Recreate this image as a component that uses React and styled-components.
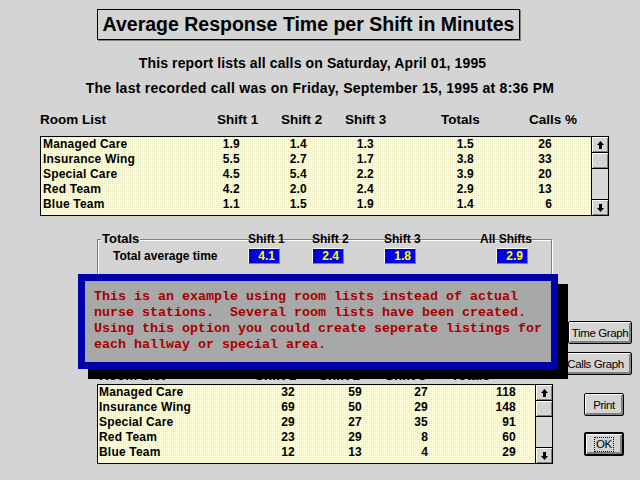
import React from 'react';
import styled, { createGlobalStyle } from 'styled-components';

const Global = createGlobalStyle`
  html, body { margin: 0; padding: 0; background: #d4d4d4; }
`;

const Page = styled.div`
  position: relative;
  width: 640px;
  height: 480px;
  overflow: hidden;
  background: #d4d4d4;
  font-family: "Liberation Sans", Arial, sans-serif;
  color: #000;
  display: flex;
  flex-direction: column;
`;

const TitleBox = styled.div`
  align-self: flex-start;
  margin: 9px 0 0 97px;
  width: 423px;
  height: 31px;
  box-sizing: border-box;
  border: 1px solid #000;
  box-shadow: 1px 1px 0 #808080;
  display: flex;
  align-items: center;
  justify-content: center;
  font-size: 19.5px;
  font-weight: 700;
`;

const Subtitle = styled.div`
  margin-top: ${p => p.$top}px;
  padding-right: ${p => p.$shift || 0}px;
  text-align: center;
  font-size: 14px;
  font-weight: 700;
  line-height: 18px;
  letter-spacing: ${p => p.$ls || 0.12}px;
`;

const HeaderRow = styled.div`
  display: grid;
  grid-template-columns: ${p => p.$cols};
  margin: ${p => p.$margin};
  font-size: 13.5px;
  font-weight: 700;
  line-height: ${p => p.$lh || 16}px;
  white-space: nowrap;
`;

const ListBox = styled.div`
  display: flex;
  margin-left: ${p => p.$left}px;
  width: ${p => p.$width}px;
  height: 80px;
  box-sizing: border-box;
  border: 1px solid #000;
  background-color: #fdfdd8;
  background-image: conic-gradient(#f4f45c 0 25%, transparent 0);
  background-size: 2px 2px;
`;

const Rows = styled.div`
  flex: 1;
  padding-left: ${p => p.$pad}px;
`;

const Row = styled.div`
  display: grid;
  grid-template-columns: ${p => p.$cols};
  height: 15px;
  line-height: 15px;
  font-size: 12px;
  font-weight: 700;
  letter-spacing: 0.2px;
  white-space: nowrap;
`;

const Num = styled.span`
  text-align: right;
`;

const ScrollBar = styled.div`
  width: 16px;
  border-left: 1px solid #000;
  display: flex;
  flex-direction: column;
  background: #d8d8d8;
`;

const ScrollBtn = styled.div`
  height: 15px;
  background: #d4d4d4;
  box-shadow: inset 1px 1px 0 #fff, inset -1px -1px 0 #808080;
  ${p => (p.$down ? 'border-top: 1px solid #000;' : 'border-bottom: 1px solid #000;')}
  display: flex;
  align-items: center;
  justify-content: center;
`;

const Thumb = styled.div`
  height: 15px;
  background: #d4d4d4;
  box-shadow: inset 1px 1px 0 #fff, inset -1px -1px 0 #808080;
  border-bottom: 1px solid #000;
`;

const Track = styled.div`
  flex: 1;
`;

const GroupBox = styled.div`
  margin: 23px 0 0 97px;
  width: 455px;
  height: 60px;
  box-sizing: border-box;
  border: 1px solid #808080;
  box-shadow: inset 1px 1px 0 #fff, 1px 1px 0 #fff;
`;

const Legend = styled.div`
  height: 0;
  margin: -8px 0 0 3px;
  line-height: 14px;
  font-size: 13px;
  font-weight: 700;
`;

const LegendText = styled.span`
  background: #d4d4d4;
  padding: 0 1px;
`;

const GroupGrid = styled.div`
  display: grid;
  grid-template-columns: 135px 64px 72px 96px auto;
  grid-template-rows: 14px 16px;
  row-gap: 2px;
  align-items: center;
  padding-left: 15px;
  font-size: 12px;
  font-weight: 700;
  line-height: 14px;
  white-space: nowrap;
`;

const ValueBox = styled.div`
  width: 32px;
  height: 16px;
  margin-left: ${p => p.$offset || 0}px;
  box-sizing: border-box;
  border: 1px solid;
  border-color: #fff #808080 #808080 #fff;
  background: #0000e0;
  color: #ffff00;
  text-align: right;
  padding-right: 4px;
  line-height: 14px;
`;

const Lower = styled.div`
  display: flex;
  gap: 6px;
  margin: 22px 0 0 97px;
`;

const LowerLeft = styled.div`
  width: 456px;
  height: 143px;
  display: flex;
  flex-direction: column;
  justify-content: flex-end;
`;

const ButtonCol = styled.div`
  width: 73px;
  display: flex;
  flex-direction: column;
  align-items: flex-end;
`;

const Button = styled.button`
  width: ${p => p.$w}px;
  height: ${p => p.$h || 23}px;
  margin-top: ${p => p.$top || 0}px;
  margin-right: ${p => p.$right || 0}px;
  padding: 0;
  box-sizing: border-box;
  border: ${p => (p.$default ? 2 : 1)}px solid #000;
  border-radius: 2px;
  background: #d4d4d4;
  box-shadow: inset 1px 1px 0 #fff, inset -2px -2px 0 #808080;
  font-family: "Liberation Sans", Arial, sans-serif;
  font-size: 11.5px;
  letter-spacing: -0.4px;
  color: #000;
  display: flex;
  align-items: center;
  justify-content: center;
`;

const FocusRing = styled.span`
  border: 1px dotted #000;
  padding: 0 1px;
  line-height: 13px;
`;

const Notice = styled.div`
  position: absolute;
  left: 78px;
  top: 274px;
  width: 480px;
  height: 95px;
  box-sizing: border-box;
  border: 7px solid #0000a8;
  background: #a8a8a8;
  box-shadow: 10px 10px 0 #000;
  padding: 8px 0 0 9px;
  font-family: "Liberation Mono", "Courier New", monospace;
  font-size: 13.333px;
  font-weight: 700;
  line-height: 16px;
  color: #a80000;
  white-space: pre;
`;

const Arrow = ({ down }) => (
  <svg width="7" height="8" viewBox="0 0 7 8" style={{ transform: down ? 'rotate(180deg)' : 'none' }}>
    <polygon points="3.5,0 7,4 5,4 5,8 2,8 2,4 0,4" fill="#000" />
  </svg>
);

const Scroller = () => (
  <ScrollBar>
    <ScrollBtn><Arrow /></ScrollBtn>
    <Thumb />
    <Track />
    <ScrollBtn $down><Arrow down /></ScrollBtn>
  </ScrollBar>
);

const rooms = [
  ['Managed Care', '1.9', '1.4', '1.3', '1.5', '26'],
  ['Insurance Wing', '5.5', '2.7', '1.7', '3.8', '33'],
  ['Special Care', '4.5', '5.4', '2.2', '3.9', '20'],
  ['Red Team', '4.2', '2.0', '2.4', '2.9', '13'],
  ['Blue Team', '1.1', '1.5', '1.9', '1.4', '6'],
];

const calls = [
  ['Managed Care', '32', '59', '27', '118'],
  ['Insurance Wing', '69', '50', '29', '148'],
  ['Special Care', '29', '27', '35', '91'],
  ['Red Team', '23', '29', '8', '60'],
  ['Blue Team', '12', '13', '4', '29'],
];

const upperCols = '160px 37px 67px 67px 100px 78px';
const lowerCols = '156px 40px 67px 66px 88px';

export default function App() {
  return (
    <Page>
      <Global />
      <TitleBox>Average Response Time per Shift in Minutes</TitleBox>
      <Subtitle $top={14} $shift={15}>This report lists all calls on Saturday, April 01, 1995</Subtitle>
      <Subtitle $top={7} $ls={0.25}>The last recorded call was on Friday, September 15, 1995 at 8:36 PM</Subtitle>

      <HeaderRow $cols="177px 64px 64px 96px 88px auto" $margin="15px 0 0 40px">
        <span>Room List</span>
        <span>Shift 1</span>
        <span>Shift 2</span>
        <span>Shift 3</span>
        <span>Totals</span>
        <span>Calls %</span>
      </HeaderRow>
      <ListBox $left={40} $width={569} style={{ marginTop: 8 }}>
        <Rows $pad={2}>
          {rooms.map(r => (
            <Row key={r[0]} $cols={upperCols}>
              <span>{r[0]}</span>
              {r.slice(1).map((v, i) => <Num key={i}>{v}</Num>)}
            </Row>
          ))}
        </Rows>
        <Scroller />
      </ListBox>

      <GroupBox>
        <Legend><LegendText>Totals</LegendText></Legend>
        <GroupGrid>
          <span />
          <span>Shift 1</span>
          <span>Shift 2</span>
          <span>Shift 3</span>
          <span>All Shifts</span>
          <span>Total average time</span>
          <ValueBox>4.1</ValueBox>
          <ValueBox>2.4</ValueBox>
          <ValueBox>1.8</ValueBox>
          <ValueBox $offset={16}>2.9</ValueBox>
        </GroupGrid>
      </GroupBox>

      <Lower>
        <LowerLeft>
          <HeaderRow $cols="156px 64px 66px 66px auto" $margin="0 0 1px 2px" $lh={14}>
            <span>Room List</span>
            <span>Shift 1</span>
            <span>Shift 2</span>
            <span>Shift 3</span>
            <span>Totals</span>
          </HeaderRow>
          <ListBox $left={0} $width={456}>
            <Rows $pad={1}>
              {calls.map(r => (
                <Row key={r[0]} $cols={lowerCols}>
                  <span>{r[0]}</span>
                  {r.slice(1).map((v, i) => <Num key={i}>{v}</Num>)}
                </Row>
              ))}
            </Rows>
            <Scroller />
          </ListBox>
        </LowerLeft>
        <ButtonCol>
          <Button $w={64}>Time Graph</Button>
          <Button $w={73} $top={8}>Calls Graph</Button>
          <Button $w={40} $top={18} $right={8}>Print</Button>
          <Button $w={40} $h={24} $top={16} $right={8} $default>
            <FocusRing>OK</FocusRing>
          </Button>
        </ButtonCol>
      </Lower>

      <Notice>
        {'This is an example using room lists instead of actual\n'}
        {'nurse stations.  Several room lists have been created.\n'}
        {'Using this option you could create seperate listings for\n'}
        {'each hallway or special area.'}
      </Notice>
    </Page>
  );
}
